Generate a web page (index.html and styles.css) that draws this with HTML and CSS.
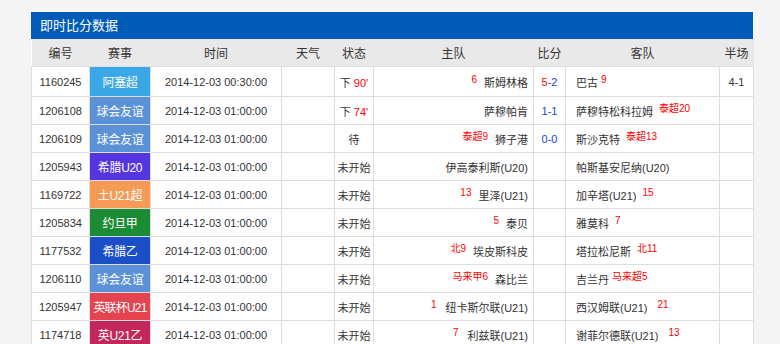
FILE: index.html
```html
<!DOCTYPE html>
<html lang="zh">
<head>
<meta charset="utf-8">
<title>即时比分数据</title>
<link rel="stylesheet" href="styles.css">
</head>
<body>
<div class="panel">
  <div class="panel-title">即时比分数据</div>
  <table class="scores">
    <colgroup>
      <col class="c-id"><col class="c-league"><col class="c-time"><col class="c-weather"><col class="c-status"><col class="c-home"><col class="c-score"><col class="c-away"><col class="c-half">
    </colgroup>
    <thead>
      <tr><th>编号</th><th>赛事</th><th>时间</th><th>天气</th><th>状态</th><th>主队</th><th>比分</th><th>客队</th><th>半场</th></tr>
    </thead>
    <tbody>
      <tr class="first">
        <td>1160245</td><td class="lg lg-aze">阿塞超</td><td>2014-12-03 00:30:00</td><td></td>
        <td>下 <span class="red">90'</span></td>
        <td class="home"><sup class="rk">6</sup>斯姆林格</td>
        <td class="score"><span class="red">5</span><span class="blue">-2</span></td>
        <td class="away">巴古<sup class="rk rk-tight">9</sup></td>
        <td>4-1</td>
      </tr>
      <tr>
        <td>1206108</td><td class="lg lg-club">球会友谊</td><td>2014-12-03 01:00:00</td><td></td>
        <td>下 <span class="red">74'</span></td>
        <td class="home">萨穆帕肯</td>
        <td class="score blue">1-1</td>
        <td class="away">萨穆特松科拉姆<sup class="rk">泰超20</sup></td>
        <td></td>
      </tr>
      <tr>
        <td>1206109</td><td class="lg lg-club">球会友谊</td><td>2014-12-03 01:00:00</td><td></td>
        <td>待</td>
        <td class="home"><sup class="rk">泰超9</sup>狮子港</td>
        <td class="score blue">0-0</td>
        <td class="away">斯沙克特<sup class="rk">泰超13</sup></td>
        <td></td>
      </tr>
      <tr>
        <td>1205943</td><td class="lg lg-gre20">希腊U20</td><td>2014-12-03 01:00:00</td><td></td>
        <td>未开始</td>
        <td class="home">伊高泰利斯(U20)</td>
        <td class="score"></td>
        <td class="away">帕斯基安尼纳(U20)</td>
        <td></td>
      </tr>
      <tr>
        <td>1169722</td><td class="lg lg-tur">土U21超</td><td>2014-12-03 01:00:00</td><td></td>
        <td>未开始</td>
        <td class="home"><sup class="rk">13</sup>里泽(U21)</td>
        <td class="score"></td>
        <td class="away">加辛塔(U21)<sup class="rk">15</sup></td>
        <td></td>
      </tr>
      <tr>
        <td>1205834</td><td class="lg lg-jor">约旦甲</td><td>2014-12-03 01:00:00</td><td></td>
        <td>未开始</td>
        <td class="home"><sup class="rk">5</sup>泰贝</td>
        <td class="score"></td>
        <td class="away">雅莫科<sup class="rk">7</sup></td>
        <td></td>
      </tr>
      <tr>
        <td>1177532</td><td class="lg lg-greb">希腊乙</td><td>2014-12-03 01:00:00</td><td></td>
        <td>未开始</td>
        <td class="home"><sup class="rk">北9</sup>埃皮斯科皮</td>
        <td class="score"></td>
        <td class="away">塔拉松尼斯<sup class="rk">北11</sup></td>
        <td></td>
      </tr>
      <tr>
        <td>1206110</td><td class="lg lg-club">球会友谊</td><td>2014-12-03 01:00:00</td><td></td>
        <td>未开始</td>
        <td class="home"><sup class="rk">马来甲6</sup>森比兰</td>
        <td class="score"></td>
        <td class="away">吉兰丹<sup class="rk rk-tight">马来超5</sup></td>
        <td></td>
      </tr>
      <tr>
        <td>1205947</td><td class="lg lg-eng">英联杯U21</td><td>2014-12-03 01:00:00</td><td></td>
        <td>未开始</td>
        <td class="home"><sup class="rk rk-wide">1</sup>纽卡斯尔联(U21)</td>
        <td class="score"></td>
        <td class="away">西汉姆联(U21)<sup class="rk rk-wide">21</sup></td>
        <td></td>
      </tr>
      <tr>
        <td>1174718</td><td class="lg lg-engb">英U21乙</td><td>2014-12-03 01:00:00</td><td></td>
        <td>未开始</td>
        <td class="home"><sup class="rk rk-wide">7</sup>利兹联(U21)</td>
        <td class="score"></td>
        <td class="away">谢菲尔德联(U21)<sup class="rk rk-wide">13</sup></td>
        <td></td>
      </tr>
    </tbody>
  </table>
</div>
</body>
</html>
```

FILE: styles.css
```css
html, body {
  margin: 0;
  padding: 0;
  background: #f4f4f4;
}

body {
  font-family: "Liberation Sans", "Noto Sans CJK SC", sans-serif;
  color: #333;
  padding: 12px 0 0 31px;
}

.panel {
  width: 722px;
  background: #fff;
}

.panel-title {
  height: 27px;
  line-height: 27px;
  background: #005bb7;
  color: #fff;
  font-size: 13px;
  padding-left: 9px;
}

.scores {
  width: 722px;
  table-layout: fixed;
  border-collapse: collapse;
}

.c-id { width: 58px; }
.c-league { width: 61px; }
.c-time { width: 131px; }
.c-weather { width: 53px; }
.c-status { width: 39px; }
.c-home { width: 160px; }
.c-score { width: 32px; }
.c-away { width: 154px; }
.c-half { width: 34px; }

.scores th {
  height: 27px;
  padding: 0;
  background: #e9e9e9;
  font-weight: normal;
  font-size: 12px;
  color: #333;
  text-align: center;
}

.scores td {
  height: 27px;
  padding: 0;
  border: 1px solid #dddddd;
  font-size: 11px;
  text-align: center;
  white-space: nowrap;
  overflow: visible;
}

.scores tr.first td {
  height: 29px;
}

.scores td.lg {
  color: #fff;
  font-size: 12px;
  letter-spacing: -0.3px;
  padding: 0;
}

.scores td.lg-eng {
  letter-spacing: -0.8px;
}

.lg-aze { background: #3aa8e6; }
.lg-club { background: #5a91d7; }
.lg-gre20 { background: #5535df; }
.lg-tur { background: #f59b56; }
.lg-jor { background: #1b8b34; }
.lg-greb { background: #1b4fc8; }
.lg-eng { background: #e4444f; }
.lg-engb { background: #c3265a; }

.scores td.home {
  text-align: right;
  padding-right: 5px;
}

.scores td.away {
  text-align: left;
  padding-left: 10px;
}

.red { color: #ff0000; }
.blue { color: #1c3fd1; }

.score { font-size: 12px; }

.rk {
  color: #ff0000;
  font-size: 10px;
  vertical-align: 4px;
  line-height: 0;
}

.home .rk { margin-right: 7px; }
.away .rk { margin-left: 6px; }
.away .rk-tight { margin-left: 3px; }
.home .rk-wide { margin-right: 9px; }
.away .rk-wide { margin-left: 10px; }
```
